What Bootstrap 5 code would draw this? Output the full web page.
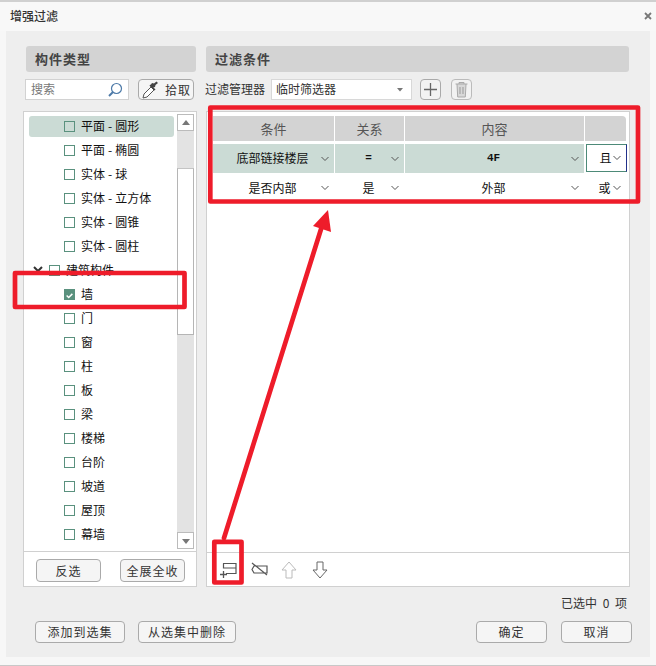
<!DOCTYPE html>
<html lang="zh">
<head>
<meta charset="utf-8">
<title>增强过滤</title>
<link href="https://cdn.jsdelivr.net/npm/bootstrap@5.3.0/dist/css/bootstrap.min.css" rel="stylesheet">
<style>
html,body{margin:0;height:666px;width:656px;overflow:hidden;background:#f7f7f7}
body{font-family:"Noto Sans CJK SC","Liberation Sans",sans-serif;font-size:12px;color:#111;line-height:1.2}
.dlg{position:relative;width:656px;height:666px;border-top:2px solid #d0d0d0;border-bottom:1px solid #c8c8c8}
.ttl{height:29px;padding-left:10px;color:#333;background:#f8f8f8;font-weight:500}
.xbtn{width:12px;margin-right:2px;margin-top:-2px}
.inner{background:#eeeeee;margin:0 6px;height:626px;padding:15px 0 0 17px;position:relative}
.lcol{width:174px;flex:none}
.rcol{width:424px;flex:none;margin-left:9px}
.hd{height:26px;background:#d3d3d3;border-radius:3px;font-weight:700;font-size:13px;color:#444;padding-left:9px;letter-spacing:1px;margin-left:3px;width:170px}
.rcol .hd{margin-left:0;width:423px}
.tools{height:21px;margin-top:7px}
.srch{width:104px;height:21px;margin-left:2px;background:#fff;border:1px solid #d2d2d2;padding-left:5px;color:#777}
.gb{background:#f5f5f5;border:1px solid #aaa;border-radius:4px;color:#333;font-size:12px;padding:0;line-height:1;letter-spacing:1px}
.pick{width:56px;height:21px;margin-left:9px}
.lbl{color:#333;margin-right:6px;width:60px}
.mgr{margin-left:-1px}
.sel{width:141px;height:21px;background:#fff;border:1px solid #d8d8d8;padding:0 4px;color:#333}
.sq{width:21px;height:21px;margin-left:8px;background:#f2f2f2;border:1px solid #aaa;border-radius:4px}
.sq.dim{margin-left:10px;border-color:#bbb}
.lpanel{height:476px;margin-top:11px;background:#fff;border:1px solid #d0d0d0}
.lbody{height:439px;position:relative}
.tree{width:153px;padding-top:4px}
.trow{height:24px;padding-left:35px;gap:6px;margin-left:5px;margin-right:3px;border-radius:3px;white-space:nowrap}
.trow.on{height:21px;margin-bottom:1px;background:#cbdbd5}
.trow.parent{padding-left:20px}
.hy{padding:0 3px}
.cb{width:11px;height:11px;border:1px solid #5a917e;flex:none;background:transparent}
.cb.chk{background:#5a917e}
.tw{position:absolute;left:9px;top:154px}
.sb{width:17px;background:#e3e3e3;height:435px;margin-top:2px}
.sbb{height:17px;background:#fff;border:1px solid #bbb;flex:none}
.thumb{height:167px;margin-top:37px;background:#fff;border:1px solid #b5b5b5;border-top-color:#c4c4c4}
.sb .spc{flex:1}
.lfoot{height:35px;border-top:1px solid #d0d0d0;padding:7px 0 0 12px;gap:19px}
.lfoot .gb{width:65px;height:23px}
.rpanel{height:476px;margin-top:11px;background:#fff;border:1px solid #d0d0d0}
.cgrid{margin:0 3px 0 6px;width:414px}
.gh,.gr{display:grid;grid-template-columns:122px 70px 180px 42px}
.gh>div{height:25px;background:#d3d3d3;border-right:1px solid #fff;color:#555;font-size:13px}
.gh>div:last-child{border-right:0;border-top-right-radius:4px;margin-right:1px}
.gr{height:29px;margin-top:3px}
.gr+.gr{margin-top:0;height:30px}
.gc{position:relative;text-align:center;border-right:1px solid #fff;font-size:12px}
.gr.on .gc{background:#cbdbd5}
.gr.on .gc.plain{background:#fff;border:1px solid #4d8a78;border-right:1px solid #22308a;height:28px;margin-left:1px}
.gc>span{margin-right:2px}
.gc svg{position:absolute;right:5px;top:50%;margin-top:-3px}
.gc .mono{font-family:"Liberation Mono",monospace;font-weight:700;font-size:11px}
.rbody{height:440px;padding-top:4px}
.rfoot{height:34px;border-top:1px solid #d0d0d0;padding:8px 0 0 13px}
.ti{margin-left:13px}
.ti.tn{margin-left:11px}
.status{height:34px;width:604px;color:#333;text-align:right;padding-top:9px;word-spacing:3px}
.bbar{width:609px}
.bbar .gb{height:22px}
.w90{width:90px;margin-left:12px}.w98{width:98px;margin-left:13px}.w71{width:71px}
.w71b{width:71px;margin-left:14px}
.anno{position:absolute;left:0;top:-2px;width:656px;height:666px;pointer-events:none}
</style>
</head>
<body>
<div class="dlg">
  <div class="ttl d-flex align-items-center justify-content-between">
    <span>增强过滤</span>
    <svg class="xbtn" width="12" height="12" viewBox="0 0 12 12"><path d="M3 3l6 6M9 3l-6 6" stroke="#777" stroke-width="1.8"/></svg>
  </div>
  <div class="inner">
    <div class="d-flex">
      <div class="lcol">
        <div class="hd d-flex align-items-center">构件类型</div>
        <div class="tools d-flex">
          <div class="srch d-flex align-items-center justify-content-between">搜索
            <svg class="me-1" width="18" height="18" viewBox="0 0 18 18"><circle cx="10.5" cy="7.5" r="5" fill="#fff" stroke="#4d7aa8" stroke-width="1.2"/><path d="M7 11l-4 4" stroke="#4d7aa8" stroke-width="2"/></svg>
          </div>
          <button class="gb pick d-flex align-items-center justify-content-center gap-1" type="button">
            <svg width="20" height="19" viewBox="0 0 20 19"><path d="M2 18l1-4 7-7 3 3-7 7z" fill="#fff" stroke="#555"/><path d="M9 6l2 2 3-1 .5-2 2.500-2-1.500-1.500-2.500 2-2-.500z" fill="#444"/><path d="M9 5l5 5" stroke="#444" stroke-width="1.500"/></svg>拾取
          </button>
        </div>
        <div class="lpanel">
          <div class="lbody d-flex">
            <svg class="tw" width="10" height="8" viewBox="0 0 10 8"><path d="M1 1l4 4 4-4" fill="none" stroke="#333" stroke-width="2"/></svg>
            <div class="tree">
              <div class="trow on d-flex align-items-center"><span class="cb"></span><span>平面<span class="hy">-</span>圆形</span></div>
              <div class="trow d-flex align-items-center"><span class="cb"></span><span>平面<span class="hy">-</span>椭圆</span></div>
              <div class="trow d-flex align-items-center"><span class="cb"></span><span>实体<span class="hy">-</span>球</span></div>
              <div class="trow d-flex align-items-center"><span class="cb"></span><span>实体<span class="hy">-</span>立方体</span></div>
              <div class="trow d-flex align-items-center"><span class="cb"></span><span>实体<span class="hy">-</span>圆锥</span></div>
              <div class="trow d-flex align-items-center"><span class="cb"></span><span>实体<span class="hy">-</span>圆柱</span></div>
              <div class="trow parent d-flex align-items-center"><span class="cb"></span>建筑构件</div>
              <div class="trow d-flex align-items-center"><span class="cb chk d-flex"><svg width="11" height="11" viewBox="0 0 11 11"><path d="M2 5.500l2.500 2.500L9 3.500" fill="none" stroke="#fff" stroke-width="1.800"/></svg></span>墙</div>
              <div class="trow d-flex align-items-center"><span class="cb"></span>门</div>
              <div class="trow d-flex align-items-center"><span class="cb"></span>窗</div>
              <div class="trow d-flex align-items-center"><span class="cb"></span>柱</div>
              <div class="trow d-flex align-items-center"><span class="cb"></span>板</div>
              <div class="trow d-flex align-items-center"><span class="cb"></span>梁</div>
              <div class="trow d-flex align-items-center"><span class="cb"></span>楼梯</div>
              <div class="trow d-flex align-items-center"><span class="cb"></span>台阶</div>
              <div class="trow d-flex align-items-center"><span class="cb"></span>坡道</div>
              <div class="trow d-flex align-items-center"><span class="cb"></span>屋顶</div>
              <div class="trow d-flex align-items-center"><span class="cb"></span>幕墙</div>
            </div>
            <div class="sb d-flex flex-column">
              <div class="sbb d-flex align-items-center justify-content-center"><svg width="10" height="6" viewBox="0 0 10 6"><path d="M5 0l4 5H1z" fill="#777"/></svg></div>
              <div class="thumb"></div>
              <div class="spc"></div>
              <div class="sbb d-flex align-items-center justify-content-center"><svg width="10" height="6" viewBox="0 0 10 6"><path d="M5 6L1 1h8z" fill="#777"/></svg></div>
            </div>
          </div>
          <div class="lfoot d-flex">
            <button class="gb" type="button">反选</button>
            <button class="gb" type="button">全展全收</button>
          </div>
        </div>
      </div>
      <div class="rcol">
        <div class="hd d-flex align-items-center">过滤条件</div>
        <div class="tools mgr d-flex align-items-center">
          <span class="lbl">过滤管理器</span>
          <div class="sel d-flex align-items-center justify-content-between">临时筛选器
            <svg class="me-1" width="6" height="4" viewBox="0 0 6 4"><path d="M0 0h6L3 3.500z" fill="#777"/></svg>
          </div>
          <div class="sq d-flex align-items-center justify-content-center"><svg width="15" height="15" viewBox="0 0 15 15"><path d="M7.500 1v13M1 7.500h13" stroke="#666" stroke-width="1.300"/></svg></div>
          <div class="sq dim d-flex align-items-center justify-content-center"><svg width="15" height="17" viewBox="0 0 15 17"><path d="M1.500 3h12M5 3V1.500h5V3M3 3l.7 13h7.600L12 3" fill="#d8d8d8" stroke="#aaa"/><path d="M6 6v7M9 6v7" stroke="#999"/></svg></div>
        </div>
        <div class="rpanel">
          <div class="rbody">
            <div class="cgrid">
              <div class="gh text-center">
                <div class="d-flex align-items-center justify-content-center">条件</div>
                <div class="d-flex align-items-center justify-content-center">关系</div>
                <div class="d-flex align-items-center justify-content-center">内容</div>
                <div></div>
              </div>
              <div class="gr on align-items-stretch">
                <div class="gc d-flex align-items-center justify-content-center"><span>底部链接楼层</span><svg width="8" height="6" viewBox="0 0 8 6"><path d="M.5 1L4 4.500 7.500 1" fill="none" stroke="#555"/></svg></div>
                <div class="gc d-flex align-items-center justify-content-center"><span class="mono">=</span><svg width="8" height="6" viewBox="0 0 8 6"><path d="M.5 1L4 4.500 7.500 1" fill="none" stroke="#555"/></svg></div>
                <div class="gc d-flex align-items-center justify-content-center"><span class="mono">4F</span><svg width="8" height="6" viewBox="0 0 8 6"><path d="M.5 1L4 4.500 7.500 1" fill="none" stroke="#555"/></svg></div>
                <div class="gc plain d-flex align-items-center justify-content-center"><span>且</span><svg width="8" height="6" viewBox="0 0 8 6"><path d="M.5 1L4 4.500 7.500 1" fill="none" stroke="#555"/></svg></div>
              </div>
              <div class="gr align-items-stretch">
                <div class="gc d-flex align-items-center justify-content-center"><span>是否内部</span><svg width="8" height="6" viewBox="0 0 8 6"><path d="M.5 1L4 4.500 7.500 1" fill="none" stroke="#555"/></svg></div>
                <div class="gc d-flex align-items-center justify-content-center"><span>是</span><svg width="8" height="6" viewBox="0 0 8 6"><path d="M.5 1L4 4.500 7.500 1" fill="none" stroke="#555"/></svg></div>
                <div class="gc d-flex align-items-center justify-content-center"><span>外部</span><svg width="8" height="6" viewBox="0 0 8 6"><path d="M.5 1L4 4.500 7.500 1" fill="none" stroke="#555"/></svg></div>
                <div class="gc d-flex align-items-center justify-content-center"><span>或</span><svg width="8" height="6" viewBox="0 0 8 6"><path d="M.5 1L4 4.500 7.500 1" fill="none" stroke="#555"/></svg></div>
              </div>
            </div>
          </div>
          <div class="rfoot d-flex align-items-start">
            <svg width="18" height="18" viewBox="0 0 18 18"><g fill="none" stroke="#555"><path d="M3 2.500h13v10H6M3.500 2.500V7H16" stroke-width="1.200"/><path d="M0 13.500h7M3.500 10v7" stroke-width="1.300"/></g></svg>
            <svg class="ti" width="18" height="18" viewBox="0 0 18 18"><path d="M3 5h13v7H3L1 8.500zM1 2l15 12" fill="none" stroke="#555" stroke-width="1.200"/></svg>
            <svg class="ti tn" width="18" height="18" viewBox="0 0 18 18"><path d="M9 1l7 8h-4v8H6V9H2z" fill="#fff" stroke="#bbb"/></svg>
            <svg class="ti" width="18" height="18" viewBox="0 0 18 18"><path d="M9 17l7-8h-4V1H6v8H2z" fill="#fff" stroke="#666"/></svg>
          </div>
        </div>
      </div>
    </div>
    <div class="status">已选中 0 项</div>
    <div class="bbar d-flex justify-content-between">
      <div class="d-flex">
        <button class="gb w90" type="button">添加到选集</button>
        <button class="gb w98" type="button">从选集中删除</button>
      </div>
      <div class="d-flex">
        <button class="gb w71" type="button">确定</button>
        <button class="gb w71b" type="button">取消</button>
      </div>
    </div>
  </div>
  <svg class="anno" width="656" height="666" viewBox="0 0 656 666">
    <g fill="none" stroke="#ee1c2a" stroke-width="4.700" stroke-linejoin="round">
      <rect x="210.300" y="107.500" width="427.700" height="94"/>
      <rect x="15" y="273" width="169.500" height="34"/>
      <rect x="214.300" y="541.800" width="27.200" height="40.700"/>
      <path d="M224 538L322 226" stroke-linecap="round"/>
    </g>
    <path d="M328 210l3 22-18-6z" fill="#ee1c2a"/>
  </svg>
</div>
</body>
</html>
